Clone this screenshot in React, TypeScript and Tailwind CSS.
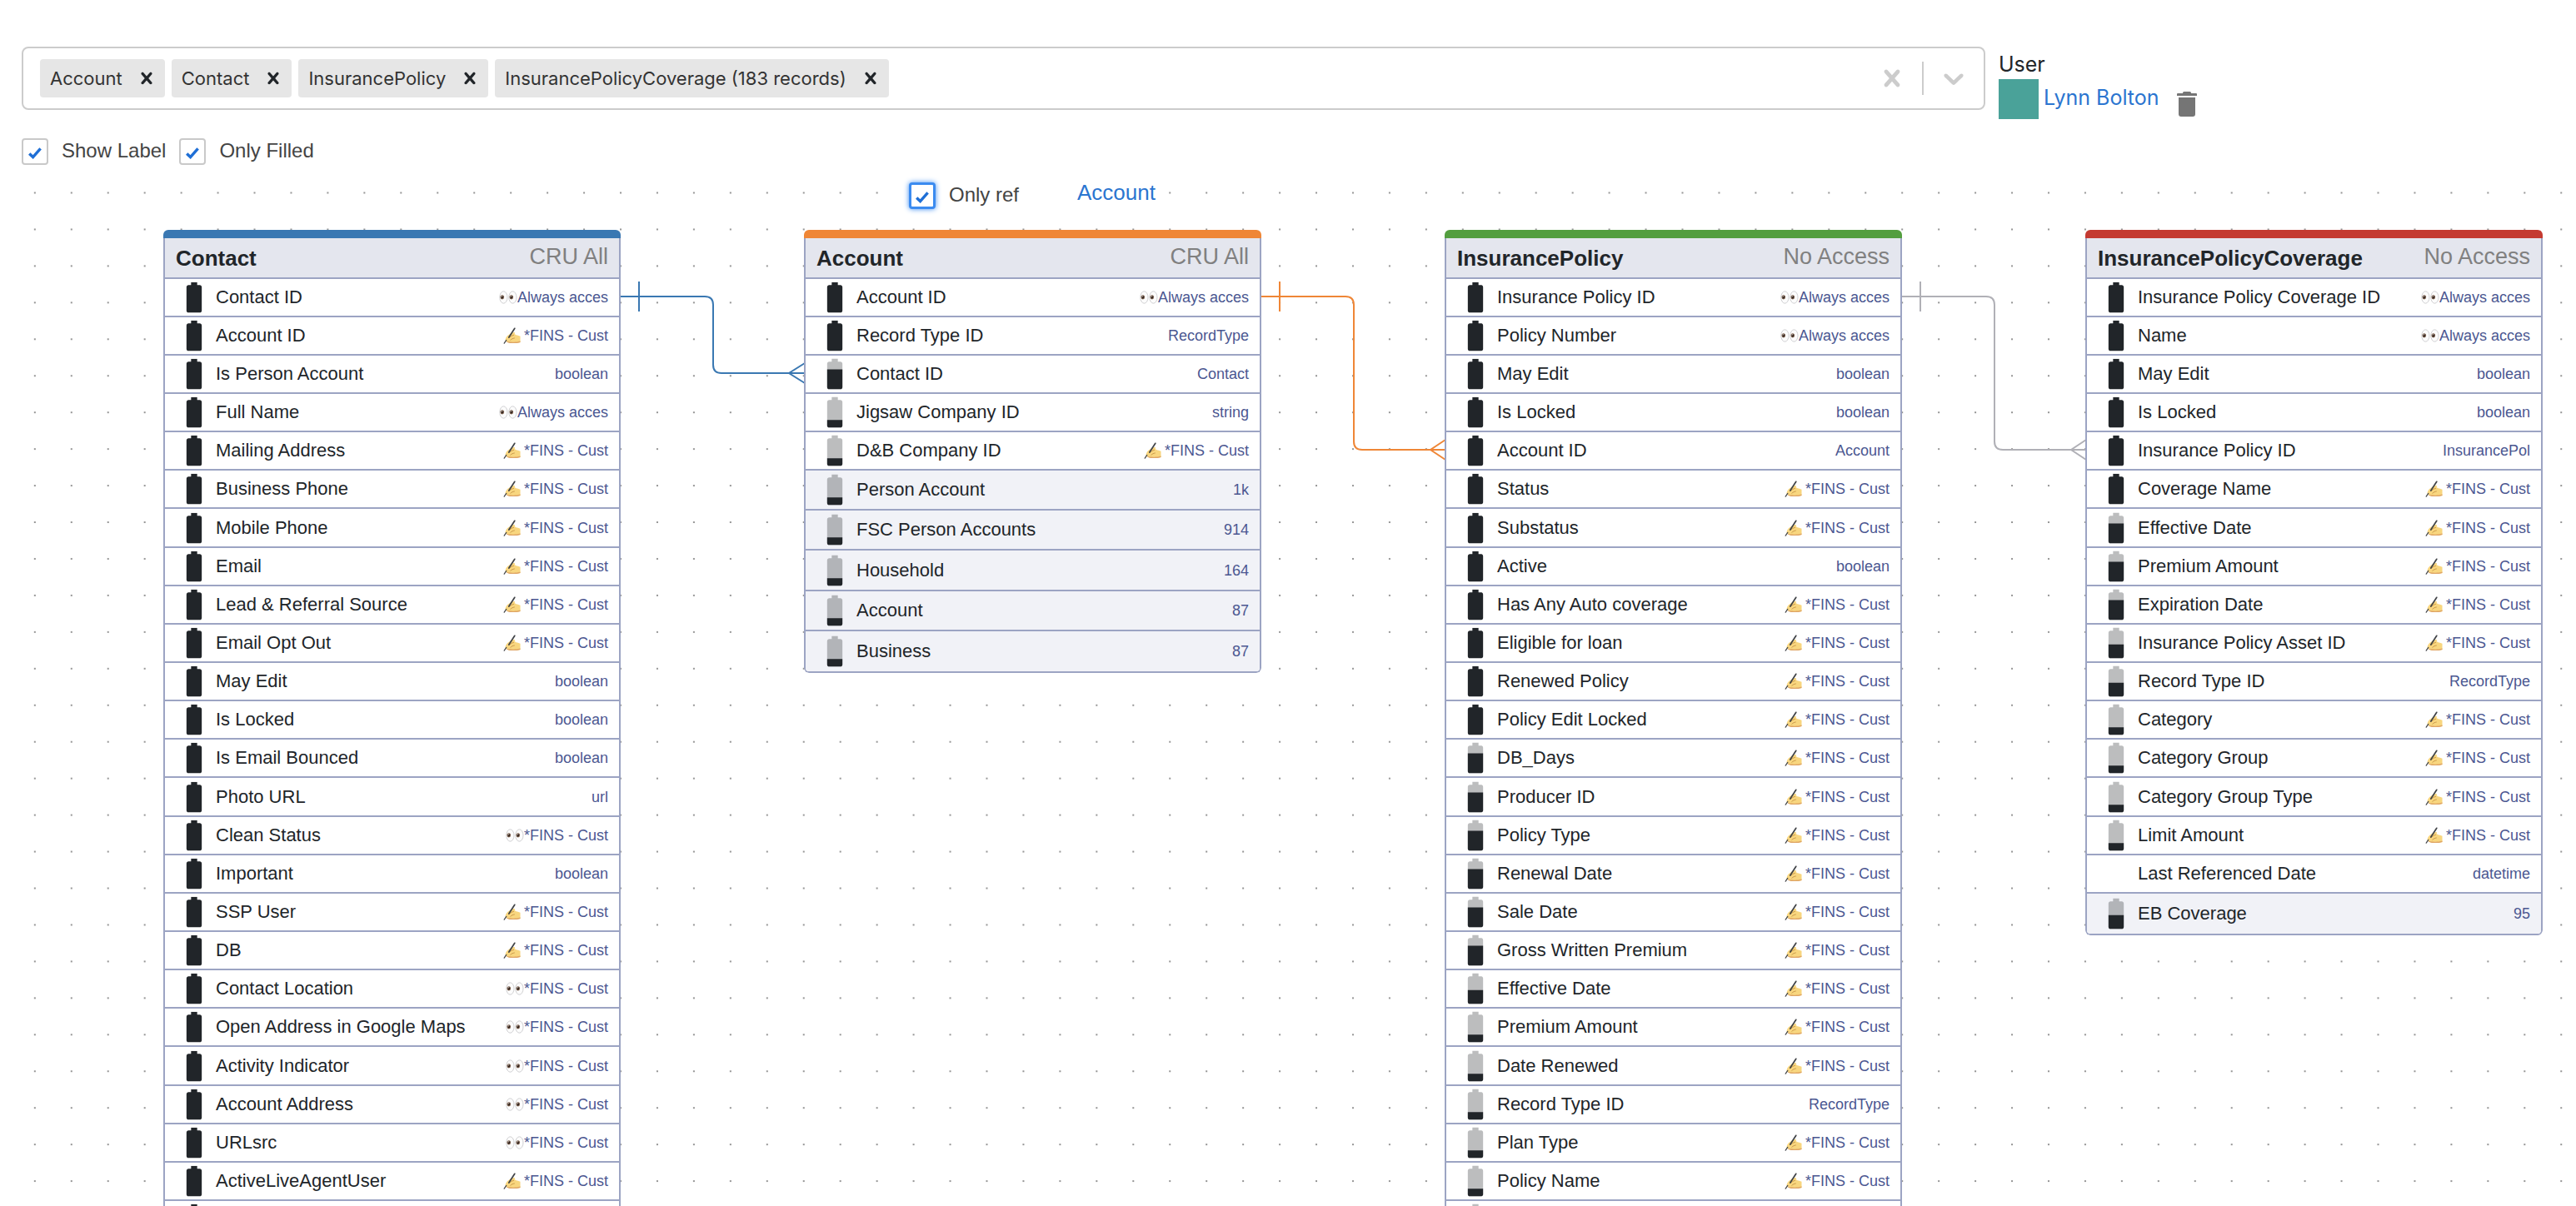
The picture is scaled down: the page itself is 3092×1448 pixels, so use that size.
import React, { useId, useState } from "react";

type Level = "full" | "high" | "half" | "low" | "none";
type Access = "read" | "write" | null;
type Field = [label: string, type: string, access: Access, level: Level];

const ALWAYS = "Always acces";
const FINS = "*FINS - Cust";

const full = (label: string, type: string): Field => [label, type, null, "full"];
const seen = (label: string): Field => [label, ALWAYS, "read", "full"];
const write = (label: string, level: Level = "full"): Field => [label, FINS, "write", level];
const read = (label: string): Field => [label, FINS, "read", "full"];

type Entity = {
  name: string;
  access: string;
  place: string;
  bar: string;
  fields: Field[];
  groups: Field[];
};

const entities: Entity[] = [
  {
    name: "Contact",
    access: "CRU All",
    place: "left-[196px]",
    bar: "bg-[#3a78b2]",
    fields: [
      seen("Contact ID"),
      write("Account ID"),
      full("Is Person Account", "boolean"),
      seen("Full Name"),
      write("Mailing Address"),
      write("Business Phone"),
      write("Mobile Phone"),
      write("Email"),
      write("Lead & Referral Source"),
      write("Email Opt Out"),
      full("May Edit", "boolean"),
      full("Is Locked", "boolean"),
      full("Is Email Bounced", "boolean"),
      full("Photo URL", "url"),
      read("Clean Status"),
      full("Important", "boolean"),
      write("SSP User"),
      write("DB"),
      read("Contact Location"),
      read("Open Address in Google Maps"),
      read("Activity Indicator"),
      read("Account Address"),
      read("URLsrc"),
      write("ActiveLiveAgentUser"),
      full("", ""),
    ],
    groups: [],
  },
  {
    name: "Account",
    access: "CRU All",
    place: "left-[965px]",
    bar: "bg-[#ef8636]",
    fields: [
      seen("Account ID"),
      full("Record Type ID", "RecordType"),
      ["Contact ID", "Contact", null, "high"],
      ["Jigsaw Company ID", "string", null, "low"],
      write("D&B Company ID", "low"),
    ],
    groups: [
      ["Person Account", "1k", null, "low"],
      ["FSC Person Accounts", "914", null, "low"],
      ["Household", "164", null, "low"],
      ["Account", "87", null, "low"],
      ["Business", "87", null, "low"],
    ],
  },
  {
    name: "InsurancePolicy",
    access: "No Access",
    place: "left-[1734px]",
    bar: "bg-[#539e3f]",
    fields: [
      seen("Insurance Policy ID"),
      seen("Policy Number"),
      full("May Edit", "boolean"),
      full("Is Locked", "boolean"),
      full("Account ID", "Account"),
      write("Status"),
      write("Substatus"),
      full("Active", "boolean"),
      write("Has Any Auto coverage"),
      write("Eligible for loan"),
      write("Renewed Policy"),
      write("Policy Edit Locked"),
      write("DB_Days", "high"),
      write("Producer ID", "high"),
      write("Policy Type", "high"),
      write("Renewal Date", "high"),
      write("Sale Date", "high"),
      write("Gross Written Premium", "high"),
      write("Effective Date", "half"),
      write("Premium Amount", "low"),
      write("Date Renewed", "low"),
      ["Record Type ID", "RecordType", null, "low"],
      write("Plan Type", "low"),
      write("Policy Name", "low"),
      ["", "", null, "low"],
    ],
    groups: [],
  },
  {
    name: "InsurancePolicyCoverage",
    access: "No Access",
    place: "left-[2503px]",
    bar: "bg-[#c43a31]",
    fields: [
      seen("Insurance Policy Coverage ID"),
      seen("Name"),
      full("May Edit", "boolean"),
      full("Is Locked", "boolean"),
      full("Insurance Policy ID", "InsurancePol"),
      write("Coverage Name"),
      write("Effective Date", "high"),
      write("Premium Amount", "high"),
      write("Expiration Date", "high"),
      write("Insurance Policy Asset ID", "half"),
      ["Record Type ID", "RecordType", null, "half"],
      write("Category", "low"),
      write("Category Group", "low"),
      write("Category Group Type", "low"),
      write("Limit Amount", "low"),
      ["Last Referenced Date", "datetime", null, "none"],
    ],
    groups: [["EB Coverage", "95", null, "half"]],
  },
];

const chargeTop: Record<Exclude<Level, "none">, number> = { full: 2, high: 9, half: 13, low: 17 };

const batteryShape =
  "M15.67 4H14V2h-4v2H8.33C7.6 4 7 4.6 7 5.33v15.33C7 21.4 7.6 22 8.33 22h7.33c.74 0 1.34-.6 1.34-1.33V5.33C17 4.6 16.4 4 15.67 4z";

function Battery({ level }: { level: Level }) {
  const clip = useId();
  if (level === "none") return null;
  const top = chargeTop[level];
  return (
    <svg viewBox="0 0 24 24" className="size-11 text-[#212529]" fill="currentColor" aria-hidden="true">
      <clipPath id={clip}>
        <rect x="0" y={top} width="24" height={24 - top} />
      </clipPath>
      {level !== "full" && <path d={batteryShape} fillOpacity="0.3" />}
      <path d={batteryShape} clipPath={`url(#${clip})`} />
    </svg>
  );
}

function Eyes() {
  return (
    <svg viewBox="0 0 22 16" className="h-4 w-[22px]" role="img" aria-label="Read access">
      {[5.4, 16.4].map((x) => (
        <g key={x}>
          <ellipse cx={x} cy="8" rx="4.6" ry="7.2" fill="#fcfcfc" stroke="#d0d0d2" strokeWidth="1" />
          <ellipse cx={x - 1.6} cy="7.8" rx="2.3" ry="2.6" fill="#7d6250" />
          <ellipse cx={x - 1.6} cy="7.8" rx="1.3" ry="1.6" fill="#2f211b" />
          <circle cx={x - 2.2} cy="6.8" r="0.6" fill="#fff" />
        </g>
      ))}
    </svg>
  );
}

function WritingHand() {
  return (
    <svg viewBox="0 0 21 20" className="h-5 w-[21px]" role="img" aria-label="Write access">
      <path
        d="M2.4 15.6C3 12.2 4.600 9.600 7.400 8.400c1.600-1.500 4.200-2.600 5.800-2.400 1.200.2 1.100 1.400.300 2l2 1.300c1.600.5 3 .6 5 1.500v7.100c-3.600 1.100-8 1.500-11.900 1-2.600-.3-4.700-1.200-6.200-3.300z"
        fill="#f8d67f"
      />
      <path d="M3.400 16.700c1.400 1.400 3 2 5.200 2.200 3.900.5 8.300.1 11.900-1v-1.300c-4 1.200-7.600 1.400-10.900 1-2.300-.2-4.200-.4-6.200-.9z" fill="#dfa566" />
      <path d="M7 12.800c1.600-1.900 3.400-2.900 5.600-3.500M8.800 15.200c1.400-1.300 2.800-1.900 4.600-2.200" fill="none" stroke="#c08a3e" strokeWidth="0.800" strokeLinecap="round" />
      <path d="M13.800 1.300 6.800 12" fill="none" stroke="#404347" strokeWidth="1.700" strokeLinecap="round" />
      <path d="M3.800 15.400 1.200 19.200" fill="none" stroke="#404347" strokeWidth="1.200" strokeLinecap="round" />
    </svg>
  );
}

function Row({ field: [label, type, access, level], group }: { field: Field; group?: boolean }) {
  return (
    <tr
      className={
        group
          ? "h-12 bg-[#f1f2f7] nth-[3n]:h-[49px] [&:last-child>td]:border-b-0"
          : "h-[46px] bg-white nth-[7n]:h-[47px]"
      }
    >
      <td className="border-b-2 border-[#9ca4c3] p-0">
        <div className="flex h-11 items-center pl-[13px]">
          <div className="w-12">
            <Battery level={level} />
          </div>
          <span className="text-[22px] leading-7 whitespace-nowrap text-[#212529]">{label}</span>
        </div>
      </td>
      <td className="border-b-2 border-[#9ca4c3] p-0">
        <div className="flex items-center justify-end pr-[13px] text-[18px] leading-6 whitespace-nowrap text-[#4b5791]">
          {access === "read" && <Eyes />}
          {access === "write" && (
            <span className="mr-1">
              <WritingHand />
            </span>
          )}
          {type}
        </div>
      </td>
    </tr>
  );
}

function EntityCard({ entity }: { entity: Entity }) {
  return (
    <article className={`absolute top-[68px] w-[549px] overflow-hidden rounded-md ${entity.place}`}>
      <div className={`h-2.5 ${entity.bar}`} />
      <div className="overflow-hidden rounded-b-md border-2 border-t-0 border-[#9ca4c3]">
        <table className="w-full border-separate border-spacing-0">
          <thead>
            <tr className="h-[49px] bg-[#e4e6ee]">
              <th scope="col" className="border-b-2 border-[#9ca4c3] p-0 pl-[13px] text-left text-[26px] leading-8 font-bold text-[#212529]">
                {entity.name}
              </th>
              <th scope="col" className="border-b-2 border-[#9ca4c3] p-0 pr-[13px] pb-1 text-right text-[27px] leading-8 font-normal whitespace-nowrap text-[#808080]">
                {entity.access}
              </th>
            </tr>
          </thead>
          <tbody>
            {entity.fields.map((field, i) => (
              <Row key={i} field={field} />
            ))}
          </tbody>
          {entity.groups.length > 0 && (
            <tbody>
              {entity.groups.map((field, i) => (
                <Row key={i} field={field} group />
              ))}
            </tbody>
          )}
        </table>
      </div>
    </article>
  );
}

function Links() {
  return (
    <svg className="absolute inset-0 size-full" aria-hidden="true" fill="none" strokeWidth="2">
      <defs>
        <pattern id="dots" x="30.8" y="14.1" width="40" height="40" patternUnits="userSpaceOnUse" patternTransform="scale(1.0987)">
          <rect x="6.400" y="6.400" width="1.800" height="1.800" fill="#939393" />
        </pattern>
      </defs>
      <rect width="100%" height="100%" fill="url(#dots)" />
      <path stroke="#3a78b2" d="M744 148H846q10 0 10 10V230q0 10 10 10H966M767 130v36M966 228 947 240 966 252" />
      <path stroke="#ef8636" d="M1514 148H1615q10 0 10 10V322q0 10 10 10H1735M1536 130v36M1735 320 1717 332 1735 344" />
      <path stroke="#b0b0b6" d="M2283 148H2384q10 0 10 10V322q0 10 10 10H2504M2305 130v36M2504 320 2486 332 2504 344" />
    </svg>
  );
}

function CheckBox({ label, active }: { label: string; active?: boolean }) {
  return (
    <label className="flex items-start gap-4 text-2xl leading-[30px] text-[#444444]">
      <span className="grid place-items-center">
        <input
          type="checkbox"
          defaultChecked
          className={
            active
              ? "peer col-start-1 row-start-1 size-8 appearance-none rounded border-[3px] border-[#3b8bf0] bg-white shadow-[0_0_6px_#3b8bf0]"
              : "peer col-start-1 row-start-1 size-8 appearance-none rounded border-2 border-[#c9c9c9] bg-white"
          }
        />
        <svg viewBox="0 0 16 14" className="pointer-events-none invisible col-start-1 row-start-1 mt-1 h-3.5 w-4 peer-checked:visible" fill="none" stroke="#1f6fd6" strokeWidth="3.400" aria-hidden="true">
          <path d="M1.200 7.400 5.600 11.600 14.600 1.400" />
        </svg>
      </span>
      {label}
    </label>
  );
}

const crossShape =
  "M14.348 14.849c-0.469 0.469-1.229 0.469-1.697 0l-2.651-3.030-2.651 3.029c-0.469 0.469-1.229 0.469-1.697 0-0.469-0.469-0.469-1.229 0-1.697l2.758-3.15-2.759-3.152c-0.469-0.469-0.469-1.228 0-1.697s1.228-0.469 1.697 0l2.652 3.031 2.651-3.031c0.469-0.469 1.228-0.469 1.697 0s0.469 1.229 0 1.697l-2.758 3.152 2.758 3.15c0.469 0.469 0.469 1.229 0 1.698z";
const chevronShape =
  "M4.516 7.548c0.436-0.446 1.043-0.481 1.576 0l3.908 3.747 3.908-3.747c0.533-0.481 1.141-0.446 1.574 0 0.436 0.445 0.408 1.197 0 1.615-0.406 0.418-4.695 4.502-4.695 4.502-0.217 0.223-0.502 0.335-0.787 0.335s-0.57-0.112-0.789-0.335c0 0-4.287-4.084-4.695-4.502s-0.436-1.17 0-1.615z";

function ObjectSelect() {
  const [picked, setPicked] = useState(["Account", "Contact", "InsurancePolicy", "InsurancePolicyCoverage (183 records)"]);
  return (
    <div className="flex h-[76px] min-w-0 flex-1 items-center rounded-lg border-2 border-[#cccccc] bg-white pl-5">
      <ul className="flex gap-2">
        {picked.map((name) => (
          <li key={name} className="flex h-[46px] items-center rounded bg-[#e6e6e6] pl-3 font-['Inter',sans-serif] text-[22px] whitespace-nowrap text-[#333333]">
            {name}
            <button type="button" aria-label={`Remove ${name}`} className="ml-[7px] px-2 text-[#212529]" onClick={() => setPicked(picked.filter((p) => p !== name))}>
              <svg viewBox="0 0 20 20" className="size-7" fill="currentColor" aria-hidden="true">
                <path d={crossShape} />
              </svg>
            </button>
          </li>
        ))}
      </ul>
      <input type="text" aria-label="Objects" className="min-w-0 flex-1 px-2 text-[22px] outline-none" />
      <button type="button" aria-label="Clear all" className="p-4 text-[#cccccc]" onClick={() => setPicked([])}>
        <svg viewBox="0 0 20 20" className="size-10" fill="currentColor" aria-hidden="true">
          <path d={crossShape} />
        </svg>
      </button>
      <span className="h-10 w-0.5 bg-[#cccccc]" />
      <button type="button" aria-label="Open list" className="p-4 text-[#cccccc]">
        <svg viewBox="0 0 20 20" className="size-10" fill="currentColor" aria-hidden="true">
          <path d={chevronShape} />
        </svg>
      </button>
    </div>
  );
}

export default function App() {
  return (
    <main className="flex h-screen flex-col overflow-hidden bg-white font-['Liberation_Sans',Arial,sans-serif] text-[#212529]">
      <header className="flex gap-4 pt-14 pl-[26px]">
        <ObjectSelect />
        <section className="w-[693px] font-['Inter',sans-serif] text-[25px]">
          <h2 className="mt-1 leading-[35px]">User</h2>
          <div className="flex h-12 items-start">
            <span className="size-12 bg-[#4aa299]" />
            <a href="#user" className="ml-1.5 leading-[44px] text-[#2b75d0]">
              Lynn Bolton
            </a>
            <button type="button" aria-label="Remove user" className="mt-[15px] ml-[21px]">
              <svg viewBox="0 0 24 30" className="h-[30px] w-6" fill="#757575" aria-hidden="true">
                <path d="M1 2h6V1.500Q7 0 8.500 0h7Q17 0 17 1.500V2h6q1 0 1 1v2H0V3q0-1 1-1zM2 7h20v20q0 3-3 3H5q-3 0-3-3z" />
              </svg>
            </button>
          </div>
        </section>
      </header>

      <div className="flex gap-4 pt-[23px] pl-[26px]">
        <CheckBox label="Show Label" />
        <CheckBox label="Only Filled" />
      </div>

      <section className="relative mt-2.5 min-h-0 flex-1 overflow-hidden" aria-label="Object diagram">
        <Links />
        <div className="absolute top-2 left-[1075px] flex items-start gap-[70px] bg-white py-[3px] pr-3 pl-4">
          <CheckBox label="Only ref" active />
          <a href="#account" className="text-[26px] leading-6 text-[#2b75d0]">
            Account
          </a>
        </div>
        {entities.map((entity) => (
          <EntityCard key={entity.name} entity={entity} />
        ))}
      </section>
    </main>
  );
}
